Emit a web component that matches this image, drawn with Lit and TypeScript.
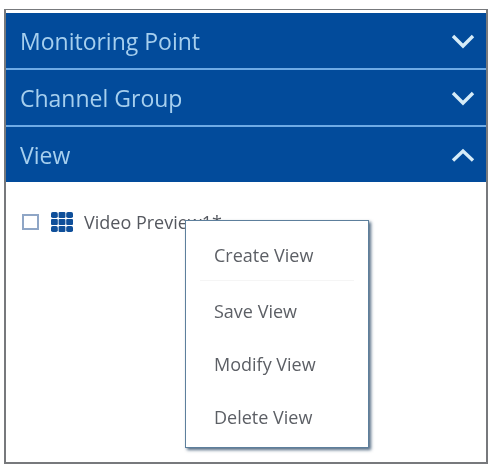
import { LitElement, html, css } from "lit";
import { customElement } from "lit/decorators.js";

@customElement("app-root")
export class AppRoot extends LitElement {
  static styles = css`
    :host {
      display: block;
      width: 489px;
      height: 465px;
      box-sizing: border-box;
      padding: 9px 1px 1px 4px;
      background: #fff;
      font-family: "Open Sans", "Noto Sans", sans-serif;
      overflow: hidden;
    }
    .frame {
      position: relative;
      height: 100%;
      box-sizing: border-box;
      border: 1px solid #77797c;
      border-width: 1px 2px 2px 2px;
      padding-top: 3px;
      background: #fff;
      filter: blur(0.55px);
    }
    .head {
      height: 55px;
      box-sizing: border-box;
      display: flex;
      align-items: center;
      justify-content: space-between;
      padding: 0 11px 0 14px;
      background: #024b9b;
      color: #a6cfee;
      font-size: 23px;
    }
    .sep {
      height: 2px;
      background: #6eabe6;
    }
    .head svg {
      width: 24px;
      height: 16px;
      display: block;
    }
    .head svg path {
      fill: none;
      stroke: #d6ecf8;
      stroke-width: 3.400;
    }
    .body {
      padding: 28px 0 0 16px;
    }
    .row {
      display: flex;
      align-items: center;
      height: 24px;
      color: #55585f;
      font-size: 18px;
    }
    .check {
      width: 13px;
      height: 12px;
      border: 2px solid #8fa6c6;
      margin-right: 12px;
      box-sizing: content-box;
    }
    .grid {
      width: 22px;
      height: 20px;
      margin-right: 11px;
      display: block;
    }
    .menu {
      position: absolute;
      left: 179px;
      top: 210px;
      width: 184px;
      height: 228px;
      box-sizing: border-box;
      background: #fff;
      border: 1px solid #5d7f9c;
      box-shadow: 2px 2px 3px rgba(40, 70, 100, 0.8);
      padding: 0 14px;
      color: #5c5f65;
      font-size: 18px;
    }
    .item {
      height: 53px;
      display: flex;
      align-items: center;
      padding-left: 14px;
    }
    .item.first {
      height: 60px;
      padding-top: 8px;
      box-sizing: border-box;
      border-bottom: 1px solid #f5f5f5;
    }
    .item.second {
      margin-top: 3px;
    }
  `;

  private chevron(up: boolean) {
    return html`<svg viewBox="0 0 24 16" aria-hidden="true">
      <path d=${up ? "M2 13.500 12 4l10 9.500" : "M2 3 12 13 22 3"}></path>
    </svg>`;
  }

  render() {
    return html`
      <div class="frame">
        <div class="head"><span>Monitoring Point</span>${this.chevron(false)}</div>
        <div class="sep"></div>
        <div class="head"><span>Channel Group</span>${this.chevron(false)}</div>
        <div class="sep"></div>
        <div class="head"><span>View</span>${this.chevron(true)}</div>
        <div class="body">
          <div class="row">
            <span class="check"></span>
            <svg class="grid" viewBox="0 0 22 20" aria-hidden="true" fill="#0f4f9a">
              <rect x="0" y="0" width="6.800" height="6" rx="1.800"></rect>
              <rect x="7.600" y="0" width="6.800" height="6" rx="1"></rect>
              <rect x="15.200" y="0" width="6.800" height="6" rx="1.800"></rect>
              <rect x="0" y="7" width="6.800" height="6" rx="1"></rect>
              <rect x="7.600" y="7" width="6.800" height="6" rx="1"></rect>
              <rect x="15.200" y="7" width="6.800" height="6" rx="1"></rect>
              <rect x="0" y="14" width="6.800" height="6" rx="1.800"></rect>
              <rect x="7.600" y="14" width="6.800" height="6" rx="1"></rect>
              <rect x="15.200" y="14" width="6.800" height="6" rx="1.800"></rect>
            </svg>
            <span>Video Preview1*</span>
          </div>
        </div>
        <div class="menu">
          <div class="item first">Create View</div>
          <div class="item second">Save View</div>
          <div class="item">Modify View</div>
          <div class="item">Delete View</div>
        </div>
      </div>
    `;
  }
}
